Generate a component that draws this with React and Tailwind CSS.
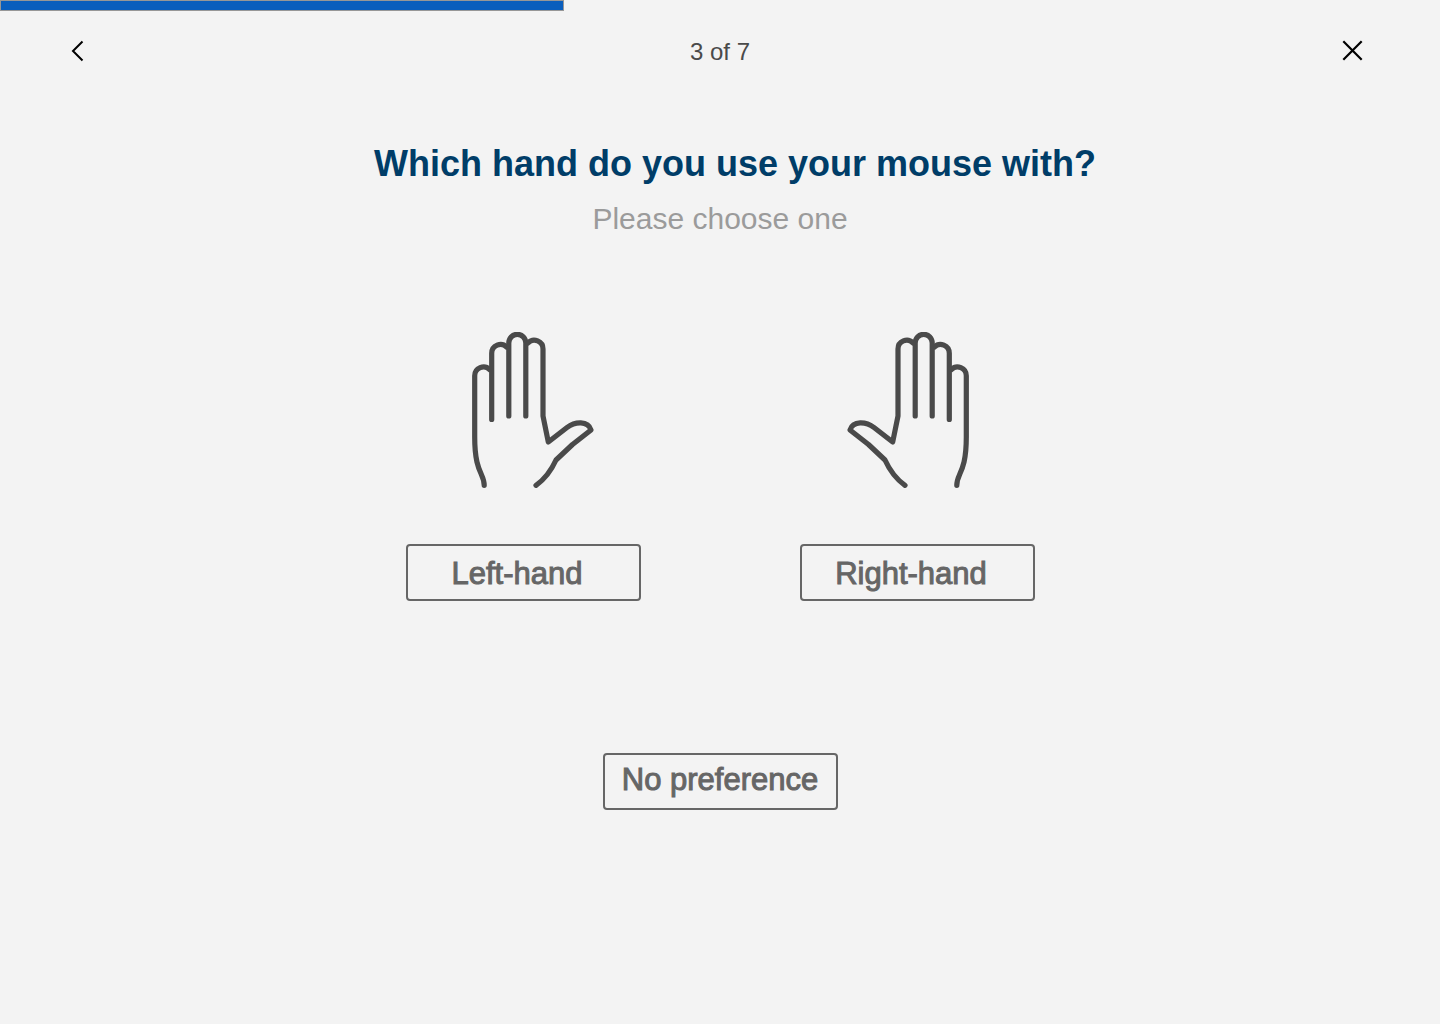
import React from "react";

function HandIcon({ className = "" }) {
  return (
    <svg
      viewBox="12 12 122 157"
      className={`h-[157px] w-[122px] ${className}`}
      fill="none"
      stroke="#4a4a4a"
      strokeWidth="5.2"
      strokeLinecap="round"
      strokeLinejoin="round"
      aria-hidden="true"
    >
      <path d="M24.2 165.3C24.2 153 14.7 153 14.7 117V55.800a8.800 8.800 0 0 1 15 -6.200" />
      <path d="M31.700 99.500V33.300a8.800 8.800 0 0 1 15 -6.200" />
      <path d="M48.800 96V23a8.500 8.700 0 0 1 17 0V96" />
      <path d="M68 23a8.700 8.700 0 0 1 15 6.200V96L88.300 122L107 107.500C115 101.500 128 100.500 131 110L112.500 124.500L96 140C91 151 85 159 76 165.300" />
    </svg>
  );
}

const choiceClass =
  "flex h-[57px] w-[235px] justify-center rounded border-2 border-[#666666] text-[31px] leading-9 whitespace-nowrap text-[#666666] [-webkit-text-stroke:1px_#666666]";

function Choice({ label, hand, handClass }) {
  return (
    <div className="flex flex-col items-center gap-[55px]">
      <div className={handClass}>{hand}</div>
      <button type="button" className={`${choiceClass} pt-[10px] pr-3`}>
        {label}
      </button>
    </div>
  );
}

export default function App() {
  return (
    <div className="min-h-screen bg-[#f3f3f3] font-['Liberation_Sans',Arial,sans-serif]">
      <div
        role="progressbar"
        aria-label="Survey progress"
        aria-valuenow={3}
        aria-valuemin={0}
        aria-valuemax={7}
        className="h-[11px]"
      >
        <div className="h-full w-[564px] max-w-full border border-[#979797] bg-[#0a5ebd]" />
      </div>

      <header className="grid h-20 grid-cols-3 items-center px-16">
        <button type="button" aria-label="Back" className="flex size-7 items-center justify-center">
          <svg viewBox="0 0 28 28" className="size-7" fill="none" stroke="#000" strokeWidth="2">
            <path d="M18.500 4.500L9 14L18.500 23.500" />
          </svg>
        </button>
        <p className="pt-px text-center text-2xl text-[#4a4a4a]">3 of 7</p>
        <button
          type="button"
          aria-label="Close"
          className="mr-[10px] flex size-7 items-center justify-center justify-self-end"
        >
          <svg viewBox="0 0 28 28" className="size-7" fill="none" stroke="#000" strokeWidth="2.2">
            <path d="M5.300 4.300L23.700 22.700M23.700 4.300L5.300 22.700" />
          </svg>
        </button>
      </header>

      <main className="flex flex-col items-center">
        <h1 className="mt-[51px] pl-[30px] text-center text-4xl leading-11 font-bold text-[#003d68]">
          Which hand do you use your mouse with?
        </h1>
        <p className="mt-[15px] text-center text-[30px] leading-9 text-[#9b9b9b]">Please choose one</p>

        <div className="mt-[95px] flex flex-wrap justify-center gap-x-[159px] gap-y-12">
          <Choice label="Left-hand" hand={<HandIcon />} handClass="pl-[19px]" />
          <Choice label="Right-hand" hand={<HandIcon className="-scale-x-100" />} handClass="pr-[19px]" />
        </div>

        <button type="button" className={`${choiceClass} mt-[152px] pt-[7px]`}>
          No preference
        </button>
      </main>
    </div>
  );
}
